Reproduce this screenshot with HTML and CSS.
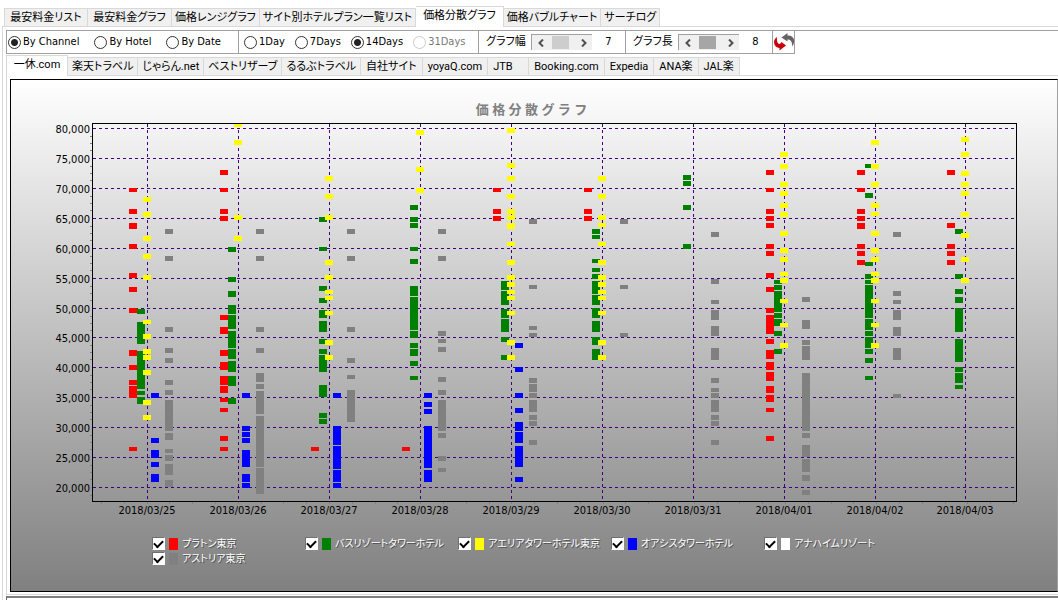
FILE: index.html
```
<!DOCTYPE html>
<html lang="ja">
<head>
<meta charset="utf-8">
<meta name="viewport" content="width=device-width, initial-scale=1">
<title>価格分散グラフ</title>
<link rel="stylesheet" href="styles.css">
</head>
<body>
<nav class="tabs tabs-main" role="tablist" aria-label="レポート">
  <button class="tab" role="tab">最安料金リスト</button>
  <button class="tab" role="tab">最安料金グラフ</button>
  <button class="tab" role="tab">価格レンジグラフ</button>
  <button class="tab" role="tab">サイト別ホテルプラン一覧リスト</button>
  <button class="tab is-active" role="tab" aria-selected="true">価格分散グラフ</button>
  <button class="tab" role="tab">価格バブルチャート</button>
  <button class="tab" role="tab">サーチログ</button>
</nav>
<main class="page">
  <div class="toolbar">
    <div class="tool-group group-mode">
      <label class="radio"><input type="radio" name="mode" checked>By Channel</label>
      <label class="radio"><input type="radio" name="mode">By Hotel</label>
      <label class="radio"><input type="radio" name="mode">By Date</label>
    </div>
    <div class="tool-group group-days">
      <label class="radio"><input type="radio" name="days">1Day</label>
      <label class="radio"><input type="radio" name="days">7Days</label>
      <label class="radio"><input type="radio" name="days" checked>14Days</label>
      <label class="radio is-disabled"><input type="radio" name="days" disabled>31Days</label>
    </div>
    <div class="tool-group group-scroll">
      <label for="graph-width">グラフ幅</label>
      <div class="scroller">
        <button class="arrow" aria-label="幅を減らす"><svg viewBox="0 0 8 8"><path d="M6 0.5 2.5 4 6 7.5"/></svg></button>
        <input id="graph-width" class="slider" type="range" min="1" max="19" value="7">
        <button class="arrow" aria-label="幅を増やす"><svg viewBox="0 0 8 8"><path d="M2 0.5 5.5 4 2 7.5"/></svg></button>
      </div>
      <output for="graph-width">7</output>
    </div>
    <div class="tool-group group-scroll">
      <label for="graph-height">グラフ長</label>
      <div class="scroller">
        <button class="arrow" aria-label="長さを減らす"><svg viewBox="0 0 8 8"><path d="M6 0.5 2.5 4 6 7.5"/></svg></button>
        <input id="graph-height" class="slider slider-dark" type="range" min="1" max="22" value="8">
        <button class="arrow" aria-label="長さを増やす"><svg viewBox="0 0 8 8"><path d="M2 0.5 5.5 4 2 7.5"/></svg></button>
      </div>
      <output for="graph-height">8</output>
    </div>
    <div class="tool-group group-refresh">
      <button class="refresh" aria-label="更新">
        <svg viewBox="0 0 21 20">
          <path fill="#c8000a" d="M4 5C0 7 -0.500 15 6.500 16V18.500L13 13.500 8.500 10 7 12C4.500 12 3.500 9 4 5Z"/>
          <path fill="#646464" d="M8.500 5.500 14.500 1V3.500C21.500 3 23 10 19 14.500 19.500 9.500 17.500 7.500 14.500 7.500V9.500Z"/>
        </svg>
      </button>
    </div>
  </div>

  <nav class="tabs tabs-sites" role="tablist" aria-label="サイト">
    <button class="tab is-active" role="tab" aria-selected="true">一休.com</button>
    <button class="tab" role="tab">楽天トラベル</button>
    <button class="tab" role="tab">じゃらん.net</button>
    <button class="tab" role="tab">ベストリザーブ</button>
    <button class="tab" role="tab">るるぶトラベル</button>
    <button class="tab roomy" role="tab">自社サイト</button>
    <button class="tab roomy" role="tab">yoyaQ.com</button>
    <button class="tab roomy" role="tab">JTB</button>
    <button class="tab roomy" role="tab">Booking.com</button>
    <button class="tab roomy" role="tab">Expedia</button>
    <button class="tab roomy" role="tab">ANA楽</button>
    <button class="tab roomy" role="tab">JAL楽</button>
  </nav>
  <div class="site-page">
    <section class="chart">
      <h1 class="chart-title">価 格 分 散 グ ラ フ</h1>
      <svg class="plot" id="plot" viewBox="12 120 1045 402" role="img" aria-label="価格分散グラフ"></svg>
      <div class="legend">
        <label><input type="checkbox" checked><span class="swatch red"></span>プラトン東京</label>
        <label><input type="checkbox" checked><span class="swatch green"></span>バスリゾートタワーホテル</label>
        <label><input type="checkbox" checked><span class="swatch yellow"></span>アエリアタワーホテル東京</label>
        <label><input type="checkbox" checked><span class="swatch blue"></span>オアシスタワーホテル</label>
        <label><input type="checkbox" checked><span class="swatch white"></span>アナハイムリゾート</label>
        <label><input type="checkbox" checked><span class="swatch gray"></span>アストリア東京</label>
      </div>
    </section>
  </div>
  <div class="next-pane"></div>
</main>
<script src="chart.js"></script>
</body>
</html>
```
FILE: styles.css
```
* { box-sizing: border-box; }

body {
  margin: 0;
  padding-top: 6px;
  background: #fff;
  color: #000;
  font-family: "DejaVu Sans Condensed", "Noto Sans CJK JP", sans-serif;
  font-size: 11px;
  line-height: 14px;
  overflow: hidden;
}

button, input { font: inherit; color: inherit; margin: 0; }

.tabs { display: flex; align-items: flex-end; position: relative; white-space: nowrap; }

.tab {
  height: 18px;
  padding: 1px 3px 0;
  border: 1px solid #d9d9d9;
  border-width: 1px 1px 0 0;
  background: #f0f0f0;
  font-family: Roboto, "Noto Sans CJK JP", sans-serif;
  font-feature-settings: "palt";
  text-align: center;
}
.tab:first-child { border-left-width: 1px; }
.tab.is-active { background: #fff; }

.tabs-main { padding-left: 4px; }
.tabs-main .tab:nth-child(-n+5) { min-width: 84px; }
.tabs-main .tab.is-active { height: 21px; margin-bottom: -1px; padding: 0 7px 2px; }

.page { margin-left: 2px; padding: 3px 0 0 3px; border: 1px solid #d9d9d9; border-width: 1px 0 0 1px; }

.toolbar { display: flex; border-top: 1px solid #a0a0a0; }

.tool-group {
  display: flex;
  align-items: center;
  height: 23px;
  border: 1px solid #a0a0a0;
  border-width: 0 1px 1px 0;
  white-space: nowrap;
  font-feature-settings: "palt";
}
.tool-group:first-child { border-left-width: 1px; }
.group-mode { width: 233px; padding-left: 1px; gap: 15px; }
.group-days { width: 240px; padding-left: 5px; gap: 10px; }
.group-scroll { width: 147px; padding-left: 7px; }
.group-scroll label { width: 45px; }
.group-scroll output { flex: 1; text-align: center; }
.group-refresh { width: 22px; }

.radio { display: flex; align-items: center; gap: 2px; }
.radio.is-disabled { color: #787878; }
.radio input {
  appearance: none;
  width: 13px;
  height: 13px;
  border: 1px solid #333;
  border-radius: 50%;
  background: #fff;
}
.radio input:checked { background: radial-gradient(circle, #222 0 3px, #fff 4px); }
.radio input:disabled { border-color: #ccc; }

.scroller {
  display: flex;
  width: 61px;
  height: 16px;
  border: 1px solid #a0a0a0;
  border-width: 1px 0 0 1px;
  background: #f0f0f0;
}
.arrow { flex: 0 0 17px; padding: 0; border: 0; background: none; display: grid; place-items: center; }
.arrow svg { width: 8px; height: 8px; fill: none; stroke: #505050; stroke-width: 2; }
.slider { appearance: none; flex: 1; min-width: 0; height: 15px; background: none; }
.slider::-webkit-slider-thumb { appearance: none; width: 17px; height: 13px; background: #cdcdcd; }
.slider-dark::-webkit-slider-thumb { background: #a6a6a6; }

.refresh { padding: 0; border: 0; background: none; width: 21px; height: 22px; display: grid; place-items: center; }
.refresh svg { width: 21px; height: 20px; }

.tabs-sites { margin-top: 1px; height: 20px; }
.tabs-sites .tab { padding: 1px 4px 0; }
.tabs-sites .tab.roomy { min-width: 41px; padding: 1px 5px 0; text-align: left; }
.tabs-sites .tab.is-active { min-width: 62px; height: 21px; margin-bottom: -1px; padding: 0 4px 2px; }

.site-page { padding: 3px 0 2px 3px; border: 1px solid #d9d9d9; border-width: 1px 0 1px 1px; }

.chart {
  display: flex;
  flex-direction: column;
  padding: 0 0 25px 1px;
  border: 1px solid #000;
  border-right: 1px solid #a0a0a0;
  background: linear-gradient(#fff, #808080);
}
.chart-title {
  margin: 0;
  padding: 21px 6px 0 0;
  height: 40px;
  color: #808080;
  font: bold 13px/16px "Noto Sans", "Noto Sans CJK JP", sans-serif;
  text-align: center;
}
.plot { display: block; width: 100%; height: auto; }
.plot text { font-size: 11px; fill: #000; }
.grid { stroke: #400080; stroke-dasharray: 3 3; fill: none; }
.frame { stroke: #000; fill: none; }
.tick { stroke: #808080; fill: none; }
.plot .red { fill: #f00; }
.plot .green { fill: #008000; }
.plot .yellow { fill: #ff0; }
.plot .blue { fill: #00f; }
.plot .gray { fill: #808080; }

.legend {
  display: grid;
  grid-template-columns: repeat(5, 153px);
  justify-content: center;
  padding-top: 14px;
  color: #fff;
  font-size: 10px;
  font-feature-settings: "palt";
  text-shadow: 1px 1px 0 #505050;
}
.legend label { display: flex; align-items: center; height: 15px; white-space: nowrap; }
.legend input {
  appearance: none;
  width: 13px;
  height: 13px;
  border: 1px solid;
  border-color: #707070 #fff #fff #707070;
  background: #fff;
  display: grid;
  place-items: center;
}
.legend input:checked::before {
  content: "";
  width: 7px;
  height: 4px;
  border: 2px solid #000;
  border-width: 0 0 2px 2px;
  transform: translateY(-1px) rotate(-45deg);
}
.swatch { width: 9px; height: 12px; margin: 0 4px; }
.swatch.red { background: #f00; }
.swatch.green { background: #008000; }
.swatch.yellow { background: #ff0; }
.swatch.blue { background: #00f; }
.swatch.white { background: #fff; }
.swatch.gray { background: #808080; }

.next-pane { height: 6px; margin-top: 1px; border: 2px solid #696969; border-width: 2px 0 0 1px; border-top-color: #808080; }
```
FILE: chart.js
```
const days = [
  { x: 147, date: "2018/03/25",
    red: "188-192 209-214 223-229 244-249 273-278 287-292 308-313 350-356 365-370 380-385 386-398 447-451",
    green: "309-314 322-344 351-389 391-395 397-404",
    yellow: "197-202 212-217 236-241 254-259 275-280 320-324 334-339 349-354 355-360 370-375 400-405 415-420",
    blue: "393-398 438-443 450-458 462-467 474-482",
    gray: "229-234 256-261 327-332 348-353 358-363 380-385 390-395 400-431 433-440 449-453 455-461 464-475 480-487" },
  { x: 238, date: "2018/03/26",
    red: "170-175 188-192 209-214 216-221 315-320 327-334 350-356 362-370 376-385 386-393 398-402 408-412 436-441 447-451",
    green: "247-252 277-282 291-297 305-314 315-329 331-348 349-359 361-372 376-386 398-404",
    yellow: "124-127 140-145 215-220 236-241",
    blue: "393-398 426-431 432-437 438-443 450-467 474-482 483-488",
    gray: "229-234 256-261 327-332 348-353 373-382 384-389 391-414 416-467 468-494" },
  { x: 329, date: "2018/03/27",
    red: "447-451",
    green: "217-222 247-251 286-291 298-303 310-318 321-332 339-344 349-354 355-372 385-397 413-418 419-424",
    yellow: "176-181 194-199 215-220 260-265 275-280 290-294 296-300 311-315 340-345 355-360",
    blue: "393-398 426-445 446-469 470-482 483-488",
    gray: "229-234 256-261 327-332 358-363 375-379 390-422" },
  { x: 420, date: "2018/03/28",
    red: "447-451",
    green: "205-210 217-222 223-228 247-251 259-264 286-296 297-330 331-338 343-348 349-356 361-366 376-380",
    yellow: "130-135 167-172 188-193",
    blue: "393-398 402-407 409-414 426-468 470-482",
    gray: "229-234 256-261 331-336 339-343 347-352 377-382 390-395 400-431 433-438 456-461 468-472" },
  { x: 511, date: "2018/03/29",
    red: "188-192 209-214 216-221",
    green: "281-290 291-305 309-318 319-332 337-342 355-360",
    yellow: "128-133 163-168 176-181 194-199 209-214 215-220 223-229 242-246 260-265 275-280 282-287 290-294 296-300 311-315 340-345 355-360",
    blue: "343-348 367-372 393-398 408-413 422-431 432-443 446-467 477-482",
    gray: "219-224 285-289 326-330 333-337 378-383 384-392 393-398 400-412 415-420 421-426 440-445" },
  { x: 602, date: "2018/03/30",
    red: "188-192 209-214 216-221",
    green: "229-234 235-239 259-263 268-272 274-279 281-294 295-305 308-318 321-332 337-345 349-360",
    yellow: "176-181 194-199 215-220 223-227 242-246 260-265 275-280 282-287 290-294 296-300 311-315 340-345 355-360",
    gray: "219-224 285-289 333-337" },
  { x: 693, date: "2018/03/31",
    green: "175-180 181-186 205-210 244-249",
    gray: "232-237 279-284 300-304 310-320 326-336 348-360 378-383 388-392 393-398 400-412 415-420 421-426 440-445" },
  { x: 784, date: "2018/04/01",
    red: "170-175 188-192 209-214 216-221 223-228 244-249 251-256 273-278 287-292 308-313 315-334 339-344 350-359 362-370 372-381 386-393 395-402 408-412 436-441",
    green: "280-284 285-290 291-312 313-318 319-326 331-336 349-354",
    yellow: "152-157 164-169 182-187 191-196 203-208 212-217 231-236 248-253 257-262 272-276 278-283 299-303 323-327 343-348",
    gray: "297-302 320-329 340-345 346-360 373-431 433-438 445-457 459-472 475-481 490-495" },
  { x: 875, date: "2018/04/02",
    red: "170-175 188-192 209-214 216-221 223-229 244-249 251-256 260-265",
    green: "164-168 193-198 262-266 274-279 280-284 285-318 319-330 331-336 337-348 349-354 358-363 376-380",
    yellow: "140-145 164-169 182-187 203-208 212-216 231-236 248-253 257-262 272-276 278-283 299-303 323-327 343-348",
    gray: "232-237 291-296 300-304 310-320 327-336 348-360 394-398" },
  { x: 965, date: "2018/04/03",
    red: "170-175 223-228 244-249 251-256 260-265",
    green: "229-234 274-279 289-294 297-303 308-332 339-362 367-372 373-383 385-389",
    yellow: "137-142 152-157 171-176 182-187 191-196 212-217 233-238 257-262 278-283" }
];

const gridRows = [128, 158, 188, 218, 248, 278, 308, 337, 367, 397, 427, 457, 487];
const seriesOffset = { red: -18, green: -10, yellow: -4, blue: 4, gray: 18 };
const frame = { left: 92, top: 123, right: 1016, bottom: 501 };
const plot = document.getElementById("plot");

function add(name, attrs, text) {
  const node = document.createElementNS("http://www.w3.org/2000/svg", name);
  for (const key in attrs) node.setAttribute(key, attrs[key]);
  if (text) node.textContent = text;
  plot.appendChild(node);
}

function line(cls, x1, y1, x2, y2) {
  add("path", { class: cls, "shape-rendering": "crispEdges", d: `M${x1} ${y1}L${x2} ${y2}` });
}

gridRows.forEach((y, i) => {
  line("grid", frame.left + 1, y + 0.5, frame.right, y + 0.5);
  add("text", { x: 90, y: y + 5, "text-anchor": "end" }, (80 - i * 5) + ",000");
  for (const step of [8, 15, 22]) {
    if (y + step < frame.bottom) line("tick", 90, y + step + 0.5, 92, y + step + 0.5);
  }
});

for (let i = 0; i < 41; i++) {
  const x = Math.round(101 + i * 22.8) + 0.5;
  if (x < frame.right) line("tick", x, 502, x, 504);
}

for (const day of days) {
  line("grid", day.x + 0.5, frame.top + 1, day.x + 0.5, frame.bottom);
  add("text", { x: day.x, y: 514, "text-anchor": "middle" }, day.date);
}

add("rect", { class: "frame", "shape-rendering": "crispEdges", x: frame.left + 0.5, y: frame.top + 0.5,
  width: frame.right - frame.left, height: frame.bottom - frame.top });

for (const day of days) {
  for (const name in seriesOffset) {
    for (const range of (day[name] || "").split(" ").filter(Boolean)) {
      const [top, bottom] = range.split("-").map(Number);
      add("rect", { class: name, "shape-rendering": "crispEdges", x: day.x + seriesOffset[name], y: top,
        width: 8, height: bottom - top });
    }
  }
}
```
